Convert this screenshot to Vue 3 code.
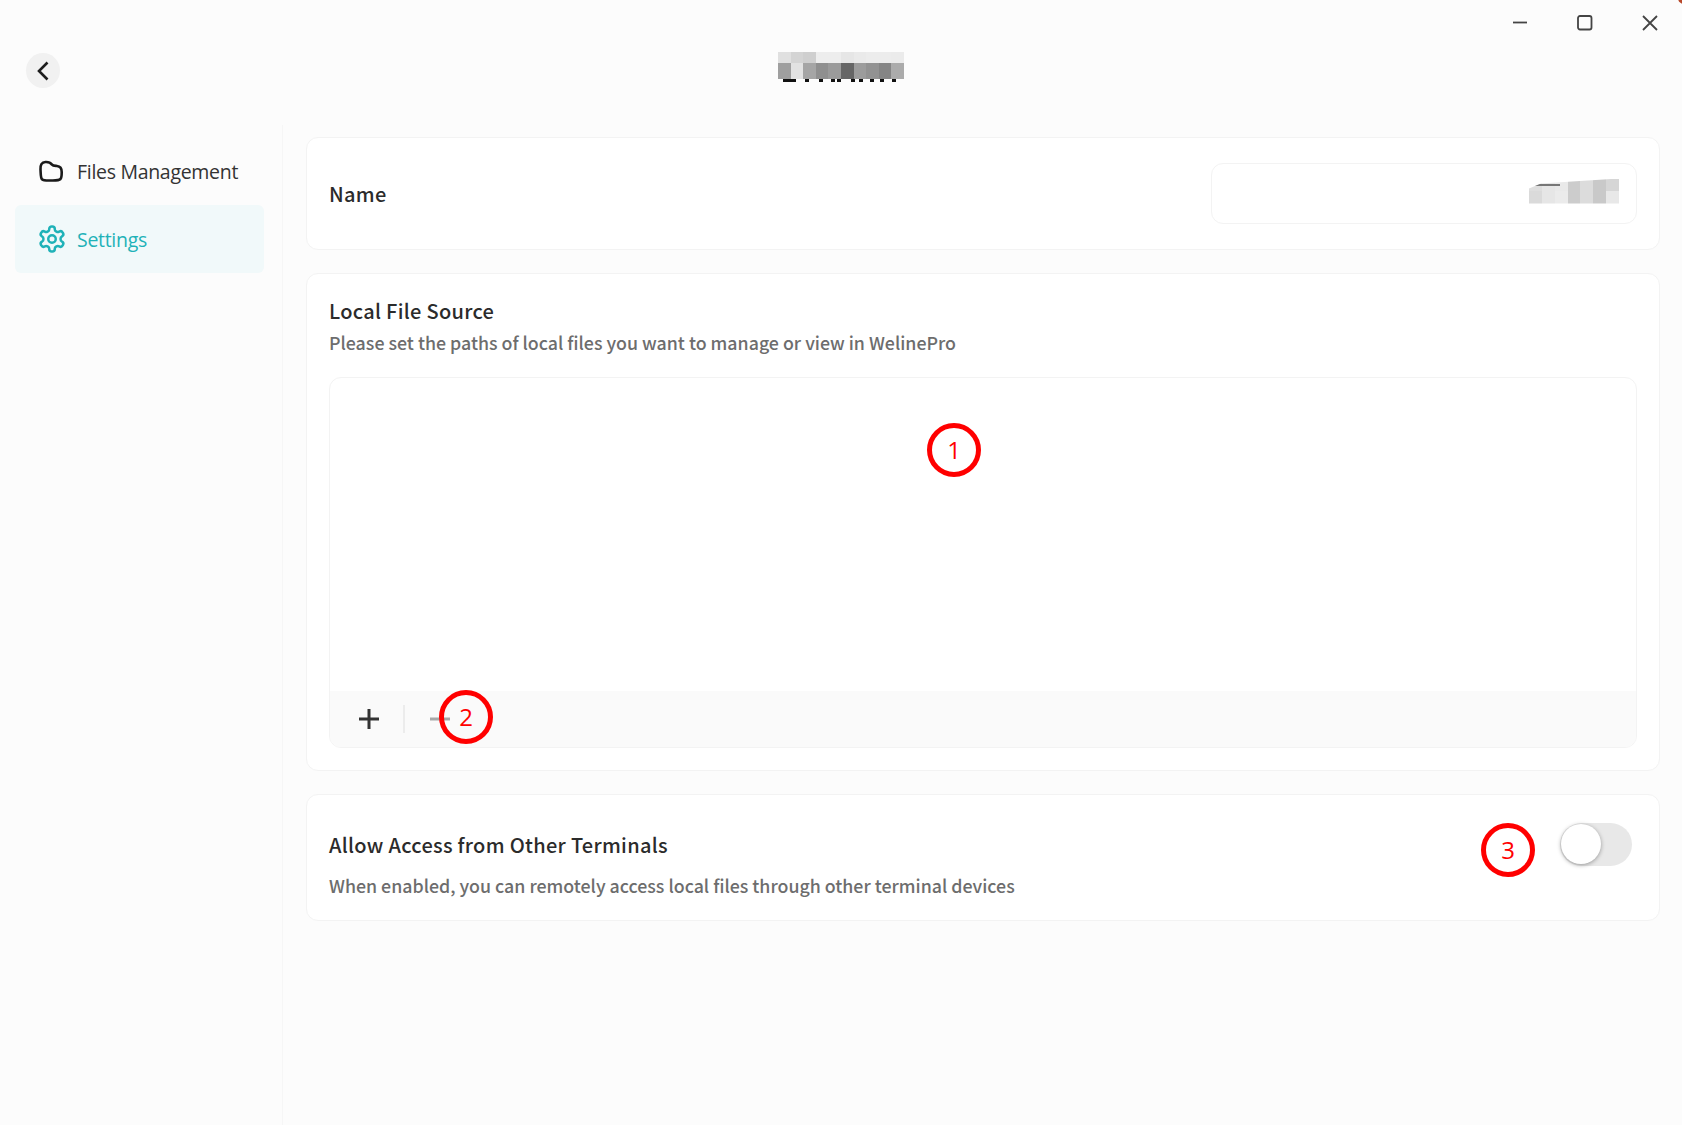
<script setup>
const titleTop = ['#e0e0e0','#d4d4d4','#cfcfcf','#ededed','#ededed','#e6e6e6','#eaeaea','#ececec','#ececec','#ebebeb']
const titleBottom = ['#9f9f9f','#e2e2e2','#a5a5a5','#8f8f8f','#9a9a9a','#666666','#9c9c9c','#929292','#858585','#ababab']
const titleBits = [[5,13],[27,4],[41,4],[53,4],[59,4],[73,4],[81,4],[92,4],[102,4],[114,4]]
const nameTop = ['#dedede','#e6e6e6','#e9e9e9','#cccccc','#dcdcdc','#c9c9c9','#d6d6d6']
const nameBottom = ['#dadada','#e6e6e6','#ebebeb','#cccccc','#dcdcdc','#c9c9c9','#e8e8e8']
</script>

<template>
  <div class="window">
    <header class="topbar">
      <button class="back" aria-label="Back">
        <svg width="16" height="20" viewBox="0 0 16 20"><path d="M12.500 1.500 4 10l8.500 8.500" /></svg>
      </button>
      <div class="title-mosaic" aria-hidden="true">
        <div class="mosaic-row top">
          <i v-for="(c, n) in titleTop" :key="n" :style="{ background: c }"></i>
        </div>
        <div class="mosaic-row bottom">
          <i v-for="(c, n) in titleBottom" :key="n" :style="{ background: c }"></i>
        </div>
        <b v-for="(b, n) in titleBits" :key="n" :style="{ left: b[0] + 'px', width: b[1] + 'px' }"></b>
      </div>
      <div class="window-controls">
        <svg width="16" height="16" viewBox="0 0 16 16"><path d="M1 7.500h14" /></svg>
        <svg width="16" height="16" viewBox="0 0 16 16"><rect x="1" y="1" width="13.500" height="13.500" rx="2" /></svg>
        <svg width="16" height="16" viewBox="0 0 16 16"><path d="M1 1l14 14M15 1 1 15" /></svg>
      </div>
    </header>

    <div class="body">
      <aside class="sidebar">
        <div class="nav-item">
          <svg width="30" height="30" viewBox="-1 -3 30 30" class="nav-icon folder">
            <path d="M2.500 9.500C2.200 5 3.600 2.200 7.500 2c3.500-.2 5 .6 6.500 2.600 1 1.300 3 1.200 5 1.400 3.300.3 4.700 2.400 4.700 6 0 3 .1 5.500-1.200 7-1.300 1.400-4 1.600-9 1.500-4 0-7.700.4-9.500-1.300C2.500 17.800 2.800 13.500 2.500 9.500Z" />
          </svg>
          <span>Files Management</span>
        </div>
        <div class="nav-item active">
          <svg width="30" height="30" viewBox="0 0 24 24" class="nav-icon">
            <path d="M12.220 2h-.44a2 2 0 0 0-2 2v.18a2 2 0 0 1-1 1.730l-.43.25a2 2 0 0 1-2 0l-.15-.08a2 2 0 0 0-2.730.730l-.22.38a2 2 0 0 0 .73 2.730l.15.1a2 2 0 0 1 1 1.720v.51a2 2 0 0 1-1 1.740l-.15.09a2 2 0 0 0-.73 2.730l.22.38a2 2 0 0 0 2.730.73l.15-.08a2 2 0 0 1 2 0l.43.25a2 2 0 0 1 1 1.730V20a2 2 0 0 0 2 2h.44a2 2 0 0 0 2-2v-.18a2 2 0 0 1 1-1.730l.43-.25a2 2 0 0 1 2 0l.15.08a2 2 0 0 0 2.730-.73l.22-.39a2 2 0 0 0-.73-2.730l-.15-.08a2 2 0 0 1-1-1.740v-.5a2 2 0 0 1 1-1.740l.15-.09a2 2 0 0 0 .73-2.730l-.22-.38a2 2 0 0 0-2.730-.73l-.15.08a2 2 0 0 1-2 0l-.43-.25a2 2 0 0 1-1-1.730V4a2 2 0 0 0-2-2z" />
            <circle cx="12" cy="12" r="3" />
          </svg>
          <span>Settings</span>
        </div>
      </aside>

      <main class="main">
        <section class="card name-card">
          <h2>Name</h2>
          <div class="name-input">
            <div class="name-mosaic" aria-hidden="true">
              <div class="name-row">
                <i v-for="(c, n) in nameTop" :key="n" :style="{ background: c }"></i>
              </div>
              <div class="name-row">
                <i v-for="(c, n) in nameBottom" :key="n" :style="{ background: c }"></i>
              </div>
              <b></b>
            </div>
          </div>
        </section>

        <section class="card source-card">
          <h2>Local File Source</h2>
          <p>Please set the paths of local files you want to manage or view in WelinePro</p>
          <div class="source-box">
            <div class="source-list"></div>
            <div class="source-footer">
              <svg class="plus" width="22" height="22" viewBox="0 0 22 22"><path d="M11 1v20M1 11h20" /></svg>
              <span class="divider"></span>
              <svg class="minus" width="22" height="22" viewBox="0 0 22 22"><path d="M1 11h20" /></svg>
            </div>
          </div>
        </section>

        <section class="card access-card">
          <div class="access-text">
            <h2>Allow Access from Other Terminals</h2>
            <p>When enabled, you can remotely access local files through other terminal devices</p>
          </div>
          <div class="switch"><span class="knob"></span></div>
        </section>
      </main>
    </div>

    <span class="marker m1">1</span>
    <span class="marker m2">2</span>
    <span class="marker m3">3</span>
    <span class="corner"></span>
  </div>
</template>

<style>
html, body { margin: 0; background: #fcfcfc; }
</style>

<style scoped>
.window {
  position: relative;
  width: 1682px;
  height: 1125px;
  overflow: hidden;
  background: #fcfcfc;
  display: flex;
  flex-direction: column;
  font-family: "Noto Sans CJK SC", "Noto Sans", sans-serif;
  color: #333;
}
.topbar {
  position: relative;
  height: 125px;
  flex: none;
}
.back {
  position: absolute;
  left: 26px;
  top: 53px;
  width: 34px;
  height: 35px;
  padding: 0;
  border: 0;
  border-radius: 50%;
  background: #f1f1f1;
  display: flex;
  align-items: center;
  justify-content: center;
}
.back path {
  fill: none;
  stroke: #1d1d1d;
  stroke-width: 2.600;
}
.title-mosaic {
  position: absolute;
  left: 778px;
  top: 52px;
  width: 126px;
  height: 30px;
}
.mosaic-row {
  display: flex;
}
.mosaic-row i { flex: 1; }
.mosaic-row.top { height: 11px; }
.mosaic-row.bottom { height: 16px; }
.title-mosaic b {
  position: absolute;
  top: 27px;
  height: 3px;
  background: #111;
}
.window-controls {
  position: absolute;
  top: 15px;
  right: 24px;
  display: flex;
  gap: 49px;
}
.window-controls svg { display: block; }
.window-controls path,
.window-controls rect {
  fill: none;
  stroke: #444;
  stroke-width: 1.800;
}
.body {
  flex: 1;
  display: flex;
  min-height: 0;
}
.sidebar {
  width: 283px;
  flex: none;
  box-sizing: border-box;
  border-right: 1px solid #f6f6f6;
  padding: 15px 18px 0 15px;
  display: flex;
  flex-direction: column;
  gap: 2px;
}
.nav-item {
  height: 63px;
  border-radius: 6px;
  display: flex;
  align-items: center;
  gap: 10px;
  padding-left: 22px;
  font-family: "Open Sans", "Noto Sans", sans-serif;
  font-size: 19.500px;
  letter-spacing: -0.300px;
  color: #333;
}
.nav-item.active {
  height: 68px;
  background: #f1f9fa;
  color: #1fb2b8;
}
.nav-icon {
  flex: none;
  fill: none;
  stroke: #1a1a1a;
  stroke-width: 2.600;
}
.active .nav-icon { stroke: #1fb2b8; stroke-width: 2; }
.main {
  flex: 1;
  min-width: 0;
  box-sizing: border-box;
  padding: 12px 22px 0 23px;
  display: flex;
  flex-direction: column;
  gap: 23px;
}
.card {
  box-sizing: border-box;
  background: #fff;
  border: 1px solid #f3f3f3;
  border-radius: 12px;
  padding: 0 22px;
}
h2 {
  margin: 0;
  font-size: 20px;
  font-weight: 500;
  letter-spacing: 0.300px;
  line-height: 28px;
  color: #2b2b2b;
}
p {
  margin: 0;
  font-size: 17.800px;
  font-weight: 500;
  line-height: 26px;
  color: #6d6d6d;
}
.name-card {
  height: 113px;
  display: flex;
  align-items: center;
  justify-content: space-between;
}
.name-input {
  width: 426px;
  height: 61px;
  margin-top: -1px;
  box-sizing: border-box;
  border: 1px solid #f3f3f3;
  border-radius: 12px;
  position: relative;
}
.name-mosaic {
  position: absolute;
  right: 17px;
  top: 15px;
  width: 90px;
  height: 25px;
  clip-path: polygon(0 10px, 12px 5px, 90px 0, 90px 25px, 0 25px);
}
.name-row { display: flex; height: 12.500px; }
.name-row i { flex: 1; }
.name-mosaic b {
  position: absolute;
  left: 5px;
  top: 5px;
  width: 26px;
  height: 2px;
  background: #777;
}
.source-card {
  height: 498px;
  padding-top: 23px;
  padding-bottom: 22px;
  display: flex;
  flex-direction: column;
}
.source-card p { margin-top: 4px; }
.source-box {
  flex: 1;
  margin-top: 22px;
  min-height: 0;
  border: 1px solid #f3f3f3;
  border-radius: 12px;
  overflow: hidden;
  display: flex;
  flex-direction: column;
}
.source-list { flex: 1; }
.source-footer {
  height: 56px;
  flex: none;
  background: #fafafa;
  display: flex;
  align-items: center;
  padding-left: 28px;
}
.source-footer svg { display: block; }
.plus path { fill: none; stroke: #333; stroke-width: 3; }
.minus path { fill: none; stroke: #a8a8a8; stroke-width: 3; }
.divider {
  width: 2px;
  height: 28px;
  background: #ececec;
  margin: 0 24px 0 23px;
}
.access-card {
  height: 127px;
  display: flex;
  justify-content: space-between;
  align-items: flex-start;
  padding-right: 27px;
}
.access-text { padding-top: 36px; }
.access-text p { margin-top: 13px; }
.switch {
  position: relative;
  margin-top: 28px;
  width: 72px;
  height: 43px;
  border-radius: 22px;
  background: #e8e8e8;
}
.knob {
  position: absolute;
  left: 1px;
  top: 1px;
  width: 40px;
  height: 40px;
  border-radius: 50%;
  background: #fff;
  box-shadow: 0 1px 4px rgba(0, 0, 0, 0.350);
}
.marker {
  position: absolute;
  width: 44px;
  height: 44px;
  border: 5.500px solid #f00;
  border-radius: 50%;
  display: flex;
  align-items: center;
  justify-content: center;
  font-family: "Open Sans", "Noto Sans", sans-serif;
  font-size: 24px;
  line-height: 1;
  color: #f00;
}
.m1 { left: 927px; top: 423px; }
.m2 { left: 439px; top: 690px; }
.m3 { left: 1481px; top: 823px; }
.corner {
  position: absolute;
  right: -8px;
  top: -8px;
  width: 12px;
  height: 12px;
  border-radius: 50%;
  background: #b8482a;
}
</style>
